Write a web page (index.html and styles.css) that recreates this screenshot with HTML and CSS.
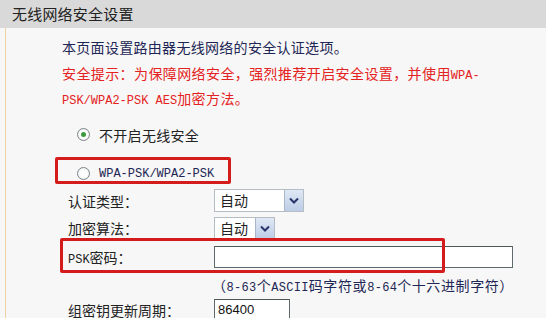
FILE: index.html
```html
<!DOCTYPE html>
<html lang="zh-CN">
<head>
    <meta charset="UTF-8">
    <title>无线网络安全设置</title>
    <link rel="stylesheet" href="styles.css">
</head>
<body>
    <div class="page">
        <div class="header">无线网络安全设置</div>
        <div class="panel">
            <p class="intro">本页面设置路由器无线网络的安全认证选项。</p>
            <p class="warn">安全提示：为保障网络安全，强烈推荐开启安全设置，并使用<span class="mono">WPA-</span></p>
            <p class="warn"><span class="mono">PSK/WPA2-PSK AES</span>加密方法。</p>

            <div class="radio-row first">
                <span class="radio checked"></span>
                <span>不开启无线安全</span>
            </div>
            <div class="radio-row second">
                <span class="radio"></span>
                <span class="mono">WPA-PSK/WPA2-PSK</span>
            </div>

            <div class="field r-auth">
                <span class="label">认证类型：</span>
                <span class="select wide"><span class="val">自动</span><span class="btn"><svg width="10" height="7" viewBox="0 0 10 7"><path d="M1 1.5 L5 5.5 L9 1.5" fill="none" stroke="#27356b" stroke-width="2"/></svg></span></span>
            </div>
            <div class="field r-enc">
                <span class="label">加密算法：</span>
                <span class="select"><span class="val">自动</span><span class="btn"><svg width="10" height="7" viewBox="0 0 10 7"><path d="M1 1.5 L5 5.5 L9 1.5" fill="none" stroke="#27356b" stroke-width="2"/></svg></span></span>
            </div>
            <div class="field r-psk">
                <span class="label"><span class="mono">PSK</span>密码：</span>
                <span class="input long"></span>
            </div>
            <div class="field r-hint">
                <span class="label"></span>
                <span class="hint">（<span class="mono">8-63</span>个<span class="mono">ASCII</span>码字符或<span class="mono">8-64</span>个十六进制字符）</span>
            </div>
            <div class="field r-group">
                <span class="label">组密钥更新周期：</span>
                <span class="input short">86400</span>
            </div>
        </div>

        <div class="mark mark-wpa"></div>
        <div class="mark mark-psk"></div>
    </div>
</body>
</html>
```

FILE: styles.css
```css
body {
    margin: 0;
    background: #f7f7f7;
    font-family: "Noto Sans CJK SC", "Noto Sans", sans-serif;
    font-size: 14px;
    color: #1d2654;
    overflow: hidden;
}

.page {
    position: relative;
    width: 546px;
    height: 318px;
}

.header {
    height: 28px;
    line-height: 27px;
    padding-left: 12px;
    background: #d9d9d9;
    color: #222;
    font-size: 15px;
    letter-spacing: 0.2px;
}

.panel {
    margin-left: 5px;
    border-left: 1px solid #f1d2a6;
    padding-top: 7px;
    padding-left: 56px;
    height: 290px;
}

p {
    margin: 0;
    height: 25.5px;
    line-height: 25px;
    white-space: nowrap;
}

.intro {
    color: #1d2654;
    letter-spacing: 0.3px;
}

.warn {
    color: #e42222;
    letter-spacing: 0.4px;
}

.mono {
    font-family: "Liberation Mono", monospace;
    font-size: 12px;
    letter-spacing: 0;
}

.radio-row {
    display: flex;
    align-items: center;
    height: 26px;
    padding-left: 15px;
    color: #222;
    letter-spacing: 0.3px;
}

.radio-row.first {
    margin-top: 10px;
}

.radio-row.second {
    margin-top: 13px;
}

.radio-row.second .mono {
    color: #1d2654;
}

.radio {
    width: 11px;
    height: 11px;
    border: 1px solid #7d8488;
    border-radius: 50%;
    background: radial-gradient(circle, #ffffff 40%, #e4e6e8 100%);
    margin-right: 9px;
    display: flex;
    align-items: center;
    justify-content: center;
}

.radio.checked::after {
    content: "";
    width: 5px;
    height: 5px;
    border-radius: 50%;
    background: #3c9a3c;
}

.field {
    display: flex;
    align-items: center;
    padding-left: 6px;
    color: #222;
}

.r-auth { height: 28px; }
.r-enc { height: 27px; }
.r-psk { height: 31px; }
.r-hint { height: 24px; }
.r-group { height: 26px; }

.label {
    width: 146px;
    flex: none;
}

.select {
    display: flex;
    height: 21px;
    border: 1px solid #b5bcc4;
    background: #fff;
}

.select .val {
    padding-left: 5px;
    line-height: 21px;
}

.select.wide .val {
    width: 64px;
}

.select:not(.wide) .val {
    width: 35px;
}

.select .btn {
    width: 18px;
    display: flex;
    align-items: center;
    justify-content: center;
    background: linear-gradient(#dfe8f5, #bccde6);
    border-left: 1px solid #a9b6c8;
}

.input {
    height: 20px;
    line-height: 20px;
    border: 1px solid #5d6b6c;
    border-top-color: #4d5858;
    background: #fff;
    padding-left: 3px;
    font-family: "Liberation Sans", sans-serif;
    font-size: 13px;
    color: #111;
}

.input.long {
    width: 294px;
}

.input.short {
    width: 71px;
}

.hint {
    color: #1d2654;
    margin-left: -2px;
    letter-spacing: 0.6px;
}

.hint .mono {
    letter-spacing: 0.3px;
}

.mark {
    position: absolute;
    border: 3px solid #d41c1c;
    border-radius: 2px;
}

.mark-wpa {
    left: 55px;
    top: 157px;
    width: 170px;
    height: 21px;
}

.mark-psk {
    left: 60px;
    top: 238px;
    width: 379px;
    height: 29px;
}
```
